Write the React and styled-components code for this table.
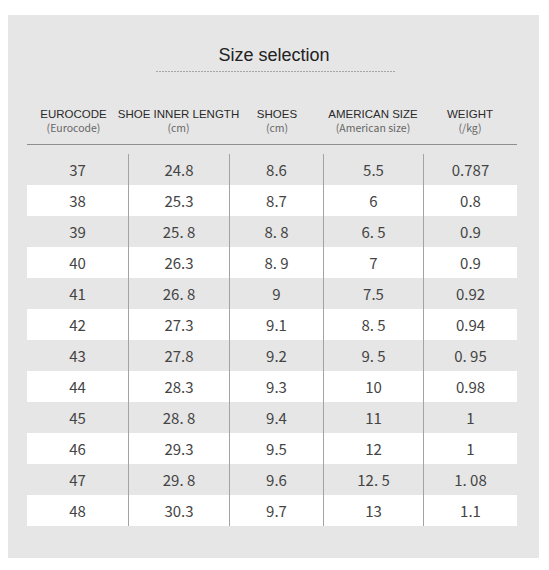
import React from 'react';
import styled, { createGlobalStyle } from 'styled-components';

const sizes = [
	['37', '24.8', '8.6', '5.5', '0.787'],
	['38', '25.3', '8.7', '6', '0.8'],
	['39', '25. 8', '8. 8', '6. 5', '0.9'],
	['40', '26.3', '8. 9', '7', '0.9'],
	['41', '26. 8', '9', '7.5', '0.92'],
	['42', '27.3', '9.1', '8. 5', '0.94'],
	['43', '27.8', '9.2', '9. 5', '0. 95'],
	['44', '28.3', '9.3', '10', '0.98'],
	['45', '28. 8', '9.4', '11', '1'],
	['46', '29.3', '9.5', '12', '1'],
	['47', '29. 8', '9.6', '12. 5', '1. 08'],
	['48', '30.3', '9.7', '13', '1.1'],
];

const columns = [
	{ title: 'EUROCODE', sub: '(Eurocode)', shift: -4 },
	{ title: 'SHOE INNER LENGTH', sub: '(cm)', shift: 0 },
	{ title: 'SHOES', sub: '(cm)', shift: 1 },
	{ title: 'AMERICAN SIZE', sub: '(American size)', shift: 0 },
	{ title: 'WEIGHT', sub: '(/kg)', shift: 0 },
];

const GlobalStyle = createGlobalStyle`
	body {
		margin: 0;
		background: #ffffff;
		font-family: 'Liberation Sans', Arial, sans-serif;
	}
`;

const Page = styled.div`
	padding: 15px 0 0 8px;
	height: 570px;
	box-sizing: border-box;
`;

const Panel = styled.section`
	width: 531px;
	height: 543px;
	background: #e6e6e6;
	box-sizing: border-box;
	padding: 29px 22px 0 19px;
	display: flex;
	flex-direction: column;
	align-items: center;
`;

const Title = styled.h1`
	margin: 0;
	font-family: 'Liberation Sans', Arial, sans-serif;
	font-weight: 400;
	font-size: 18px;
	line-height: 22px;
	color: #222;
	transform: translateX(2px);
`;

const DashedRule = styled.div`
	width: 239px;
	height: 1px;
	margin-top: 5px;
	transform: translateX(3px);
	background-image: repeating-linear-gradient(
		to right,
		#a6a6a6 0,
		#a6a6a6 2px,
		transparent 2px,
		transparent 3px
	);
`;

const Grid = styled.div`
	width: 490px;
	display: grid;
	grid-template-columns: 101px 101px 94px 100px 94px;
`;

const HeadRow = styled(Grid)`
	margin-top: 36px;
	height: 36px;
	border-bottom: 1px solid #8f8f8f;
`;

const HeadCell = styled.div`
	display: flex;
	flex-direction: column;
	align-items: center;
	white-space: nowrap;
	transform: translateX(${(p) => p.$shift}px);
`;

const HeadTitle = styled.span`
	font-size: 11.5px;
	line-height: 13px;
	color: #2a2a2a;
`;

const HeadSub = styled.span`
	font-family: 'Noto Sans CJK SC', 'Noto Sans', sans-serif;
	font-size: 10.5px;
	line-height: 13px;
	color: #666;
`;

const Body = styled.div`
	margin-top: 9px;
	display: flex;
	flex-direction: column;
`;

const Row = styled(Grid)`
	height: 31px;
	background: ${(p) => (p.$striped ? '#ffffff' : 'transparent')};
`;

const Cell = styled.div`
	display: flex;
	align-items: center;
	justify-content: center;
	font-family: 'Noto Sans CJK SC', 'Noto Sans', sans-serif;
	font-size: 15px;
	color: #444;
	white-space: pre;
	border-left: ${(p) => (p.$first ? 'none' : '1px solid #a3a3a3')};
`;

export default function App() {
	return (
		<Page>
			<GlobalStyle />
			<Panel>
				<Title>Size selection</Title>
				<DashedRule />
				<HeadRow>
					{columns.map((c) => (
						<HeadCell key={c.title} $shift={c.shift}>
							<HeadTitle>{c.title}</HeadTitle>
							<HeadSub>{c.sub}</HeadSub>
						</HeadCell>
					))}
				</HeadRow>
				<Body>
					{sizes.map((row, i) => (
						<Row key={row[0]} $striped={i % 2 === 1}>
							{row.map((v, j) => (
								<Cell key={j} $first={j === 0}>
									{v}
								</Cell>
							))}
						</Row>
					))}
				</Body>
			</Panel>
		</Page>
	);
}
